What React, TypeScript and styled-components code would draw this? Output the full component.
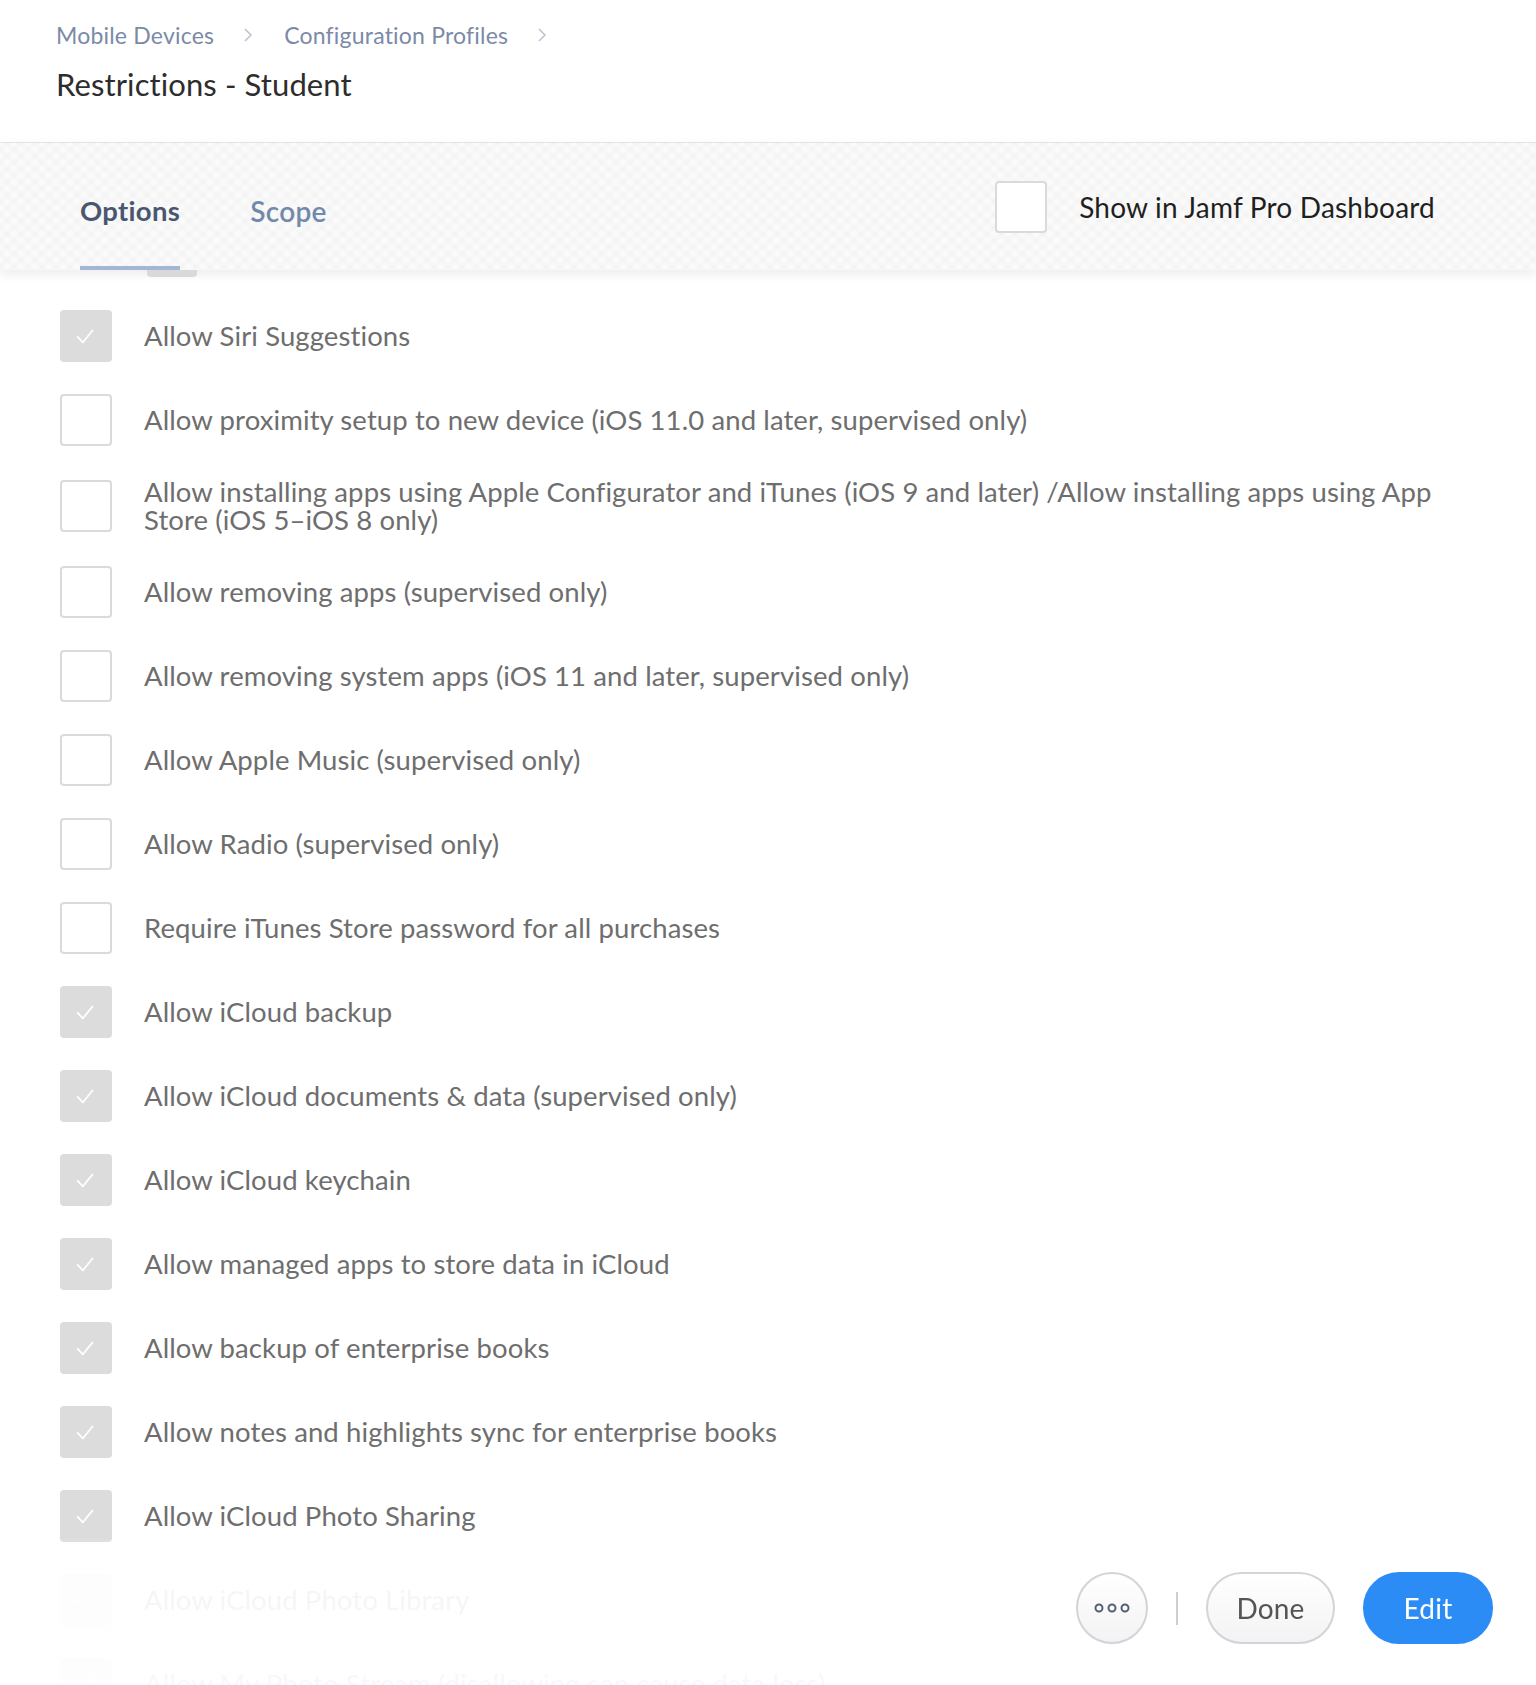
import styled, { createGlobalStyle } from 'styled-components'

interface Restriction {
  label: string
  checked: boolean
}

const restrictions: Restriction[] = [
  { label: 'Allow Siri Suggestions', checked: true },
  { label: 'Allow proximity setup to new device (iOS 11.0 and later, supervised only)', checked: false },
  {
    label:
      'Allow installing apps using Apple Configurator and iTunes (iOS 9 and later) /Allow installing apps using App Store (iOS 5–iOS 8 only)',
    checked: false
  },
  { label: 'Allow removing apps (supervised only)', checked: false },
  { label: 'Allow removing system apps (iOS 11 and later, supervised only)', checked: false },
  { label: 'Allow Apple Music (supervised only)', checked: false },
  { label: 'Allow Radio (supervised only)', checked: false },
  { label: 'Require iTunes Store password for all purchases', checked: false },
  { label: 'Allow iCloud backup', checked: true },
  { label: 'Allow iCloud documents & data (supervised only)', checked: true },
  { label: 'Allow iCloud keychain', checked: true },
  { label: 'Allow managed apps to store data in iCloud', checked: true },
  { label: 'Allow backup of enterprise books', checked: true },
  { label: 'Allow notes and highlights sync for enterprise books', checked: true },
  { label: 'Allow iCloud Photo Sharing', checked: true },
  { label: 'Allow iCloud Photo Library', checked: true },
  { label: 'Allow My Photo Stream (disallowing can cause data loss)', checked: true },
  { label: 'Allow Shared Photo Streams', checked: true }
]

const GlobalStyle = createGlobalStyle`
  html, body {
    margin: 0;
    padding: 0;
    background: #fff;
  }
  body {
    font-family: Lato, "Open Sans", "Liberation Sans", sans-serif;
    -webkit-font-smoothing: antialiased;
  }
`

const Page = styled.div`
  position: relative;
  min-height: 1685px;
  overflow: hidden;
`

const Header = styled.header`
  height: 142px;
  box-sizing: border-box;
  padding: 21px 56px 0;
  display: flex;
  flex-direction: column;
`

const Breadcrumbs = styled.nav`
  display: flex;
  align-items: center;
  height: 28px;
  font-size: 23px;
  letter-spacing: 0.2px;
  color: #7b8aa6;
`

const Crumb = styled.span`
  white-space: nowrap;
`

const Chevron = styled.span`
  display: inline-flex;
  margin: 0 32px 0 30px;
  color: #b9c1cf;
`

const Title = styled.h1`
  margin: 17px 0 0;
  font-size: 31px;
  line-height: 36px;
  font-weight: 400;
  letter-spacing: 0.1px;
  color: #2d2d2d;
`

const TabBar = styled.div`
  position: relative;
  z-index: 2;
  height: 128px;
  box-sizing: border-box;
  display: flex;
  align-items: stretch;
  padding: 0 101px 0 80px;
  background-color: #efefef;
  background-image:
    radial-gradient(circle, #fcfcfc 0px, #f7f7f7 4px, rgba(239, 239, 239, 0) 7px),
    radial-gradient(circle, #fcfcfc 0px, #f7f7f7 4px, rgba(239, 239, 239, 0) 7px);
  background-size: 14px 13px, 14px 13px;
  background-position: 0 0, 7px 6.5px;
  border-top: 1px solid #e4e4e4;
  box-shadow: 0 5px 10px rgba(0, 0, 0, 0.07);
`

const Tab = styled.div<{ $active?: boolean }>`
  display: flex;
  align-items: flex-end;
  box-sizing: border-box;
  padding-bottom: 39px;
  margin-right: 70px;
  font-size: ${p => (p.$active ? '27.5px' : '28px')};
  line-height: 32px;
  font-weight: ${p => (p.$active ? 700 : 600)};
  letter-spacing: 0.3px;
  color: ${p => (p.$active ? '#4a5670' : '#7289aa')};
  border-bottom: 4px solid ${p => (p.$active ? '#a3b6d4' : 'transparent')};
`

const Handle = styled.div`
  position: absolute;
  left: 147px;
  top: 100%;
  width: 50px;
  height: 7px;
  background: #d9d9d9;
  border-radius: 0 0 4px 4px;
`

const DashboardToggle = styled.label`
  margin-left: auto;
  display: flex;
  align-items: center;
  gap: 32px;
  font-size: 28px;
  letter-spacing: 0.2px;
  color: #1f1f1f;
`

const Box = styled.span<{ $checked?: boolean }>`
  flex-shrink: 0;
  width: 52px;
  height: 52px;
  box-sizing: border-box;
  border-radius: 4px;
  display: flex;
  align-items: center;
  justify-content: center;
  background: ${p => (p.$checked ? '#dcdcdc' : '#fff')};
  border: 2px solid ${p => (p.$checked ? '#dcdcdc' : '#dadada')};
`

const List = styled.ul`
  list-style: none;
  margin: 0;
  padding: 40px 60px 200px 60px;
  display: flex;
  flex-direction: column;
  gap: 32px;
`

const Row = styled.li`
  display: flex;
  align-items: center;
  gap: 32px;
  min-height: 52px;
`

const Label = styled.span`
  font-size: 27.5px;
  line-height: 28px;
  letter-spacing: 0.1px;
  color: #6e6e6e;
  max-width: 1330px;
`

const Footer = styled.footer`
  position: fixed;
  left: 0;
  right: 0;
  bottom: 0;
  z-index: 3;
  height: 148px;
  box-sizing: border-box;
  padding: 0 43px 6px 0;
  display: flex;
  align-items: center;
  justify-content: flex-end;
  gap: 28px;
  background: linear-gradient(
    to bottom,
    rgba(255, 255, 255, 0) 0%,
    rgba(255, 255, 255, 0.93) 22%,
    rgba(255, 255, 255, 0.95) 100%
  );
`

const RoundButton = styled.button`
  width: 72px;
  height: 72px;
  padding: 0;
  border-radius: 50%;
  border: 2px solid #d3d3d8;
  background: linear-gradient(to bottom, #ffffff, #f3f3f5);
  display: flex;
  align-items: center;
  justify-content: center;
`

const Divider = styled.span`
  width: 2px;
  height: 33px;
  background: #cfcfcf;
`

const PillButton = styled.button<{ $primary?: boolean }>`
  width: ${p => (p.$primary ? '130px' : '129px')};
  height: 72px;
  border-radius: 36px;
  font-family: inherit;
  font-size: 28px;
  letter-spacing: 0.2px;
  border: 2px solid ${p => (p.$primary ? '#2b8cf6' : '#d3d3d8')};
  background: ${p => (p.$primary ? '#2b8cf6' : 'linear-gradient(to bottom, #ffffff, #f3f3f5)')};
  color: ${p => (p.$primary ? '#fff' : '#555')};
`

function CheckMark() {
  return (
    <svg width="52" height="52" viewBox="0 0 52 52" fill="none">
      <polyline points="17,27 22.5,33 33,20" stroke="#fff" strokeWidth="2" strokeLinecap="round" strokeLinejoin="round" />
    </svg>
  )
}

function ChevronIcon() {
  return (
    <svg width="8" height="14" viewBox="0 0 8 14" fill="none">
      <polyline points="1,1 7,7 1,13" stroke="currentColor" strokeWidth="1.5" />
    </svg>
  )
}

function Dots() {
  return (
    <svg width="36" height="10" viewBox="0 0 36 10" fill="none">
      <circle cx="5" cy="5" r="3.5" stroke="#566074" strokeWidth="2" />
      <circle cx="18" cy="5" r="3.5" stroke="#566074" strokeWidth="2" />
      <circle cx="31" cy="5" r="3.5" stroke="#566074" strokeWidth="2" />
    </svg>
  )
}

export default function App() {
  return (
    <Page>
      <GlobalStyle />
      <Header>
        <Breadcrumbs>
          <Crumb>Mobile Devices</Crumb>
          <Chevron><ChevronIcon /></Chevron>
          <Crumb>Configuration Profiles</Crumb>
          <Chevron><ChevronIcon /></Chevron>
        </Breadcrumbs>
        <Title>Restrictions - Student</Title>
      </Header>

      <TabBar>
        <Tab $active>Options</Tab>
        <Tab>Scope</Tab>
        <DashboardToggle>
          <Box />
          Show in Jamf Pro Dashboard
        </DashboardToggle>
        <Handle />
      </TabBar>

      <List>
        {restrictions.map(item => (
          <Row key={item.label}>
            <Box $checked={item.checked}>{item.checked && <CheckMark />}</Box>
            <Label>{item.label}</Label>
          </Row>
        ))}
      </List>

      <Footer>
        <RoundButton aria-label="More"><Dots /></RoundButton>
        <Divider />
        <PillButton>Done</PillButton>
        <PillButton $primary>Edit</PillButton>
      </Footer>
    </Page>
  )
}
